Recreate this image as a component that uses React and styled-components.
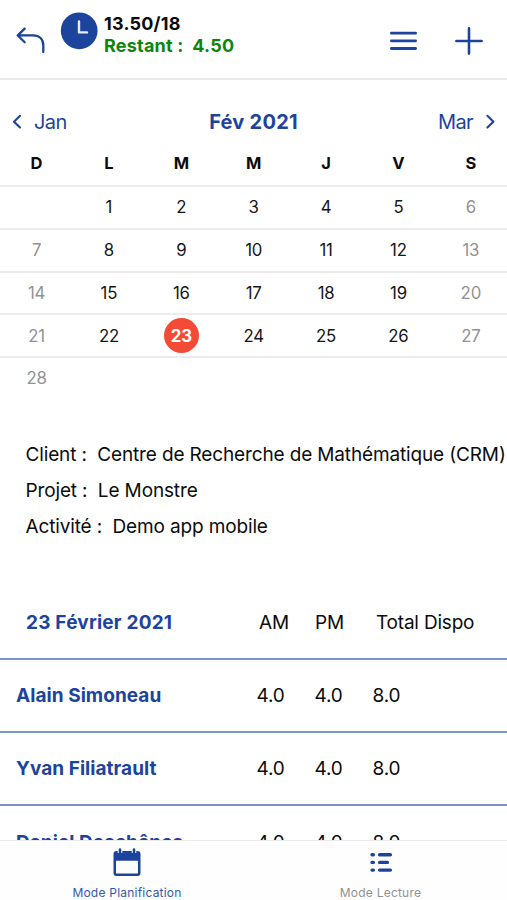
import React from 'react'
import styled, { createGlobalStyle } from 'styled-components';

const BLUE = '#1c449c';

const GlobalStyle = createGlobalStyle`
    * {
        box-sizing: border-box;
    }
    body {
        margin: 0;
        background: #fff;
        font-family: Inter, "Liberation Sans", sans-serif;
        overflow: hidden;
    }
`;

const Screen = styled.div`
    height: 900px;
    width: 507px;
    display: flex;
    flex-direction: column;
    overflow: hidden;
    background: #fff;
    color: #0c0c0c;
`;
const Header = styled.header`
    height: 80px;
    flex: none;
    display: flex;
    align-items: flex-start;
    border-bottom: 2px solid #e9e9e9;
    padding: 12px 23px 0 16px;
`;
const IconButton = styled.button`
    border: none;
    background: none;
    padding: 0;
    height: ${props => props.$h || 30}px;
    width: ${props => props.$w || 30}px;
    margin: ${props => props.$m || '0'};
    flex: none;
    color: ${BLUE};

    svg {
        display: block;
    }
`;
const Hours = styled.div`
    flex: 1;
    margin: 1px 0 0 6px;
    font-size: 18px;
    font-weight: 700;
    line-height: 22px;
    white-space: pre;
    letter-spacing: 0.2px;
`;
const Total = styled.div`
    color: #0c0c0c;
`;
const Remaining = styled.div`
    color: #0f850f;
`;
const Content = styled.main`
    flex: 1;
    min-height: 0;
    overflow: hidden;
`;
const Months = styled.div`
    height: 61px;
    padding: 25px 12px 0;
    display: grid;
    grid-template-columns: 1fr auto 1fr;
    line-height: 34px;
    color: ${BLUE};
    font-size: 20px;
`;
const MonthLink = styled.div`
    display: flex;
    align-items: center;
    height: 33px;
    gap: 12px;
    justify-content: ${props => props.$end ? 'flex-end' : 'flex-start'};
    letter-spacing: -0.6px;
`;
const Month = styled.div`
    font-weight: 700;
    letter-spacing: 0.25px;
`;
const Week = styled.div`
    display: grid;
    grid-template-columns: repeat(7, 1fr);
    align-items: center;
    height: 42.8px;
    padding: ${props => props.$last ? '0 0 3px 0.4px' : '0 0 0 0.4px'};
    border-bottom: ${props => props.$last ? 'none' : '2px solid #ececec'};
`;
const WeekHead = styled(Week)`
    height: 46px;
`;
const Day = styled.div`
    display: flex;
    justify-content: center;
    align-items: center;
    font-size: 16.8px;
    letter-spacing: -0.2px;
    color: ${props => props.$off ? '#929292' : '#161616'};
`;
const WeekDay = styled(Day)`
    font-size: 16.5px;
    font-weight: 700;
    letter-spacing: 0;
    color: #0c0c0c;
`;
const Selected = styled.span`
    height: 35px;
    width: 35px;
    margin: -1px -5px;
    border-radius: 50%;
    display: flex;
    align-items: center;
    justify-content: center;
    background: #f44b37;
    color: #fff;
    font-weight: 700;
`;
const Infos = styled.section`
    padding: 36px 0 0 25.5px;
    height: 185.6px;
`;
const Info = styled.div`
    height: 35.8px;
    line-height: 36px;
    font-size: 19px;
    white-space: pre;
    letter-spacing: -0.14px;
`;
const TableRow = styled.div`
    height: 73.3px;
    display: grid;
    grid-template-columns: 240.5px 58px 58px 1fr;
    align-items: center;
    padding-left: 16px;
    border-bottom: 2px solid #7f95c8;
    font-size: 19px;
    white-space: nowrap;
`;
const TableHead = styled(TableRow)`
    grid-template-columns: 233px 56px 61px 1fr;
    padding-left: 26px;
`;
const Name = styled.div`
    color: ${BLUE};
    font-weight: 700;
    letter-spacing: ${props => props.$ls || 0.05}px;
`;
const Cell = styled.div`
    letter-spacing: -0.2px;
`;
const TabBar = styled.nav`
    height: 60px;
    flex: none;
    display: grid;
    grid-template-columns: 1fr 1fr;
    border-top: 1px solid #ececec;
    background: #fefefe;
`;
const Tab = styled.div`
    display: flex;
    flex-direction: column;
    align-items: center;
    font-size: 12px;
    line-height: 16px;
    letter-spacing: 0.22px;
    padding-left: 0.5px;
    color: ${props => props.$active ? '#3558a8' : '#929292'};

    svg {
        display: block;
        margin: 7px 0 9px;
        color: ${BLUE};
    }
`;

const BackIcon = () => (
    <svg width="30" height="30" viewBox="0 0 30 30" fill="none" stroke="currentColor" strokeWidth="2.3" strokeLinecap="round" strokeLinejoin="round">
        <path d="M8.7 2.6 L1.7 9.4 L8.7 16.2 M1.7 9.4 H17 C23.5 9.4 27.3 13.2 27.3 19.4 V26" />
    </svg>
);
const ClockIcon = () => (
    <svg width="38" height="38" viewBox="0 0 38 38">
        <circle cx="19.2" cy="18.8" r="18.4" fill="currentColor" />
        <path d="M19 9.5 V20.4 H27" fill="none" stroke="#e8edf7" strokeWidth="2.4" strokeLinecap="round" strokeLinejoin="round" />
    </svg>
);
const MenuIcon = () => (
    <svg width="30" height="30" viewBox="0 0 30 30" stroke="currentColor" strokeWidth="2.8" strokeLinecap="round">
        <path d="M2.4 7.2 H26.6 M2.4 14.8 H26.6 M2.4 22.5 H26.6" />
    </svg>
);
const PlusIcon = () => (
    <svg width="30" height="30" viewBox="0 0 30 30" stroke="currentColor" strokeWidth="2.6" strokeLinecap="round">
        <path d="M2.4 15 H27.6 M15 2.4 V27.6" />
    </svg>
);
const Chevron = ({ right }) => (
    <svg width="10" height="16" viewBox="0 0 10 16" fill="none" stroke="currentColor" strokeWidth="2.1" strokeLinecap="round" strokeLinejoin="round">
        <path d={right ? 'M2.4 1.8 L8.4 7.7 L2.4 13.6' : 'M8 1.8 L2 7.7 L8 13.6'} />
    </svg>
);
const CalendarIcon = () => (
    <svg width="28" height="28" viewBox="0 0 28 28" fill="currentColor">
        <path fillRule="evenodd" d="M3.5 3 H24.5 Q27.5 3 27.5 6 V25 Q27.5 28 24.5 28 H3.5 Q0.5 28 0.5 25 V6 Q0.5 3 3.5 3 Z M3 12.8 V24.4 Q3 25.6 4.2 25.6 H23.8 Q25 25.6 25 24.4 V12.8 Z" />
        <path d="M7 1.6 V5 M21 1.6 V5" stroke="#fff" strokeWidth="4.6" />
        <path d="M7 1.6 V5 M21 1.6 V5" stroke="currentColor" strokeWidth="2.6" strokeLinecap="round" />
    </svg>
);
const ListIcon = () => (
    <svg width="28" height="28" viewBox="0 0 28 28" stroke="currentColor" strokeWidth="3.4" strokeLinecap="round">
        <path d="M5 6.7 H6.4 M12.6 6.7 H23.4 M5 14.4 H6.4 M12.6 14.4 H20.4 M5 22.1 H6.4 M12.6 22.1 H23.4" />
    </svg>
);

const weeks = [
    ['', 1, 2, 3, 4, 5, 6],
    [7, 8, 9, 10, 11, 12, 13],
    [14, 15, 16, 17, 18, 19, 20],
    [21, 22, 23, 24, 25, 26, 27],
    [28, '', '', '', '', '', ''],
];

const people = [
    { name: 'Alain Simoneau', am: '4.0', pm: '4.0', total: '8.0' },
    { name: 'Yvan Filiatrault', am: '4.0', pm: '4.0', total: '8.0' },
    { name: 'Daniel Deschênes', am: '4.0', pm: '4.0', total: '8.0' },
];

const App = () => {
    return(
        <>
            <GlobalStyle />
            <Screen>
                <Header>
                    <IconButton $m="14px 14px 0 0" aria-label="Retour"><BackIcon /></IconButton>
                    <IconButton $w={38} $h={38} aria-label="Heures"><ClockIcon /></IconButton>
                    <Hours>
                        <Total>13.50/18</Total>
                        <Remaining>{'Restant :  4.50'}</Remaining>
                    </Hours>
                    <IconButton $m="14px 35px 0 0" aria-label="Menu"><MenuIcon /></IconButton>
                    <IconButton $m="14px 0 0 0" aria-label="Ajouter"><PlusIcon /></IconButton>
                </Header>

                <Content>
                    <Months>
                        <MonthLink><Chevron />Jan</MonthLink>
                        <Month>Fév 2021</Month>
                        <MonthLink $end>Mar<Chevron right /></MonthLink>
                    </Months>
                    <WeekHead>
                        {['D', 'L', 'M', 'M', 'J', 'V', 'S'].map((d, i) => (
                            <WeekDay key={i}>{d}</WeekDay>
                        ))}
                    </WeekHead>
                    {weeks.map((week, w) => (
                        <Week key={w} $last={w === weeks.length - 1}>
                            {week.map((day, i) => (
                                <Day key={i} $off={i === 0 || i === 6}>
                                    {day === 23 ? <Selected>{day}</Selected> : day}
                                </Day>
                            ))}
                        </Week>
                    ))}

                    <Infos>
                        <Info>{'Client :  Centre de Recherche de Mathématique (CRM)'}</Info>
                        <Info>{'Projet :  Le Monstre'}</Info>
                        <Info>{'Activité :  Demo app mobile'}</Info>
                    </Infos>

                    <TableHead>
                        <Name $ls={0.2}>23 Février 2021</Name>
                        <Cell>AM</Cell>
                        <Cell>PM</Cell>
                        <Cell>Total Dispo</Cell>
                    </TableHead>
                    {people.map(person => (
                        <TableRow key={person.name}>
                            <Name>{person.name}</Name>
                            <Cell>{person.am}</Cell>
                            <Cell>{person.pm}</Cell>
                            <Cell>{person.total}</Cell>
                        </TableRow>
                    ))}
                </Content>

                <TabBar>
                    <Tab $active><CalendarIcon />Mode Planification</Tab>
                    <Tab><ListIcon />Mode Lecture</Tab>
                </TabBar>
            </Screen>
        </>
    );
}

export default App
